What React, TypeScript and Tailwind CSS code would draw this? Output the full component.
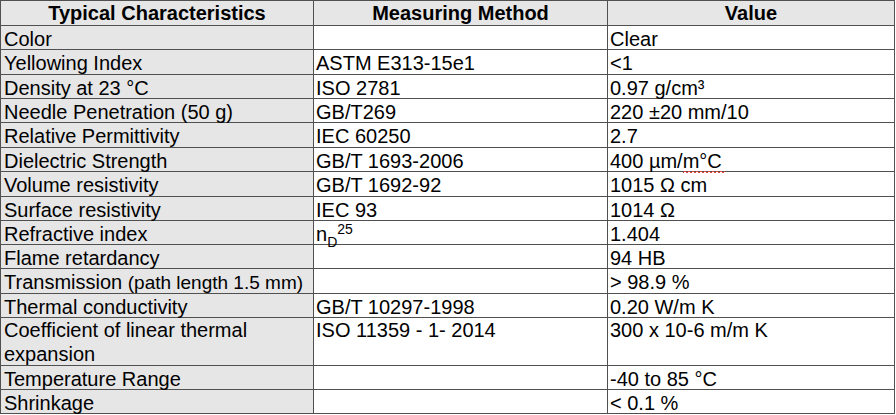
import React from "react";

type Row = {
  a: React.ReactNode;
  b: React.ReactNode;
  c: React.ReactNode;
  tall?: boolean;
};

function Squiggle({ children }: { children: React.ReactNode }) {
  return (
    <span className="relative inline-block">
      {children}
      <svg
        className="absolute left-0 top-[21px]"
        width="42"
        height="4"
        viewBox="0 0 42 4"
      >
        <path
          d="M0 3 L2 1 L4 3 L6 1 L8 3 L10 1 L12 3 L14 1 L16 3 L18 1 L20 3 L22 1 L24 3 L26 1 L28 3 L30 1 L32 3 L34 1 L36 3 L38 1 L40 3 L42 1"
          fill="none"
          stroke="#e8453c"
          strokeWidth="1"
        />
      </svg>
    </span>
  );
}

const rows: Row[] = [
  { a: "Color", b: "", c: "Clear" },
  { a: "Yellowing Index", b: "ASTM E313-15e1", c: "<1" },
  { a: "Density at 23 °C", b: "ISO 2781", c: "0.97 g/cm³" },
  { a: "Needle Penetration (50 g)", b: "GB/T269", c: "220 ±20 mm/10" },
  { a: "Relative Permittivity", b: "IEC 60250", c: "2.7" },
  {
    a: "Dielectric Strength",
    b: "GB/T 1693-2006",
    c: (
      <>
        400 µm/<Squiggle>m°C</Squiggle>
      </>
    ),
  },
  { a: "Volume resistivity", b: "GB/T 1692-92", c: "1015 Ω cm" },
  { a: "Surface resistivity", b: "IEC 93", c: "1014 Ω" },
  {
    a: "Refractive index",
    b: (
      <>
        n
        <span className="relative top-[6px] text-[14px]">D</span>
        <span className="relative top-[-7px] text-[14px]">25</span>
      </>
    ),
    c: "1.404",
  },
  { a: "Flame retardancy", b: "", c: "94 HB" },
  {
    a: (
      <>
        Transmission <span className="text-[19px]">(path length 1.5 mm)</span>
      </>
    ),
    b: "",
    c: "> 98.9 %",
  },
  { a: "Thermal conductivity", b: "GB/T 10297-1998", c: "0.20 W/m K" },
  {
    a: (
      <>
        Coefficient of linear thermal
        <br />
        expansion
      </>
    ),
    b: "ISO 11359 - 1- 2014",
    c: "300 x 10-6 m/m K",
    tall: true,
  },
  { a: "Temperature Range", b: "", c: "-40 to 85 °C" },
  { a: "Shrinkage", b: "", c: "< 0.1 %" },
];

export default function App() {
  return (
    <div
      className="w-[896px] h-[415px] bg-white text-black overflow-hidden"
      style={{ fontFamily: '"Liberation Sans", Arial, sans-serif' }}
    >
      <div className="grid grid-cols-[313px_294px_287px] grid-rows-[25px_24px_25px_24px_24px_25px_24px_25px_24px_24px_24px_25px_24px_48px_24px_24px] border-l border-t border-[#505050] w-[895px] text-[20px] leading-[24px]">
        <div className="box-border border-r border-b border-[#505050] bg-[#e6e6e6] font-bold text-center">
          Typical Characteristics
        </div>
        <div className="box-border border-r border-b border-[#505050] bg-[#e6e6e6] font-bold text-center">
          Measuring Method
        </div>
        <div className="box-border border-r border-b border-[#505050] bg-[#e6e6e6] font-bold text-center">
          Value
        </div>
        {rows.map((r, i) => (
          <React.Fragment key={i}>
            <div
              className={`box-border border-r border-b border-[#505050] bg-[#e6e6e6] pl-[3px] whitespace-nowrap ${
                r.tall ? "pt-0" : "pt-[1px]"
              }`}
            >
              {r.a}
            </div>
            <div
              className={`box-border border-r border-b border-[#505050] bg-white pl-[2px] whitespace-nowrap ${
                r.tall ? "pt-0" : "pt-[1px]"
              }`}
            >
              {r.b}
            </div>
            <div
              className={`box-border border-r border-b border-[#505050] bg-white pl-[2px] whitespace-nowrap ${
                r.tall ? "pt-0" : "pt-[1px]"
              }`}
            >
              {r.c}
            </div>
          </React.Fragment>
        ))}
      </div>
    </div>
  );
}
